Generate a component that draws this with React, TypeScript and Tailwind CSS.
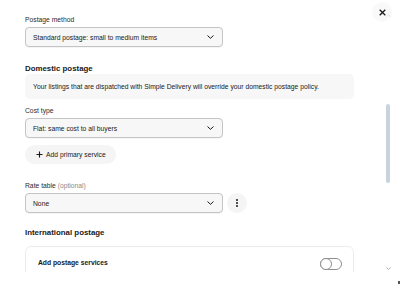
import React from "react";

const Chevron = () => (
  <svg width="7" height="4" viewBox="0 0 7 4" fill="none">
    <path d="M0.8 0.8l2.7 2.5 2.7-2.5" stroke="#191919" strokeWidth="1" strokeLinecap="round" strokeLinejoin="round" />
  </svg>
);

const Select = ({ value }: { value: string }) => (
  <div className="flex h-[20px] w-[198px] items-center justify-between rounded-[4px] border border-[#c4c4c4] bg-[#f7f7f7] pl-[7px] pr-[8px] shadow-[0_1px_0_rgba(0,0,0,0.04)]">
    <span className="text-[6.75px] leading-[9px] text-[#191919]">{value}</span>
    <Chevron />
  </div>
);

const Label = ({ children, className = "" }: { children: React.ReactNode; className?: string }) => (
  <div className={`text-[6.75px] leading-[9px] text-[#2b2b2b] ${className}`}>{children}</div>
);

export default function App() {
  return (
    <div
      className="relative flex h-[287px] w-[400px] overflow-hidden bg-white"
      style={{ fontFamily: '"Liberation Sans", Arial, sans-serif' }}
    >
      <div className="h-[272px] w-[354px] shrink-0 overflow-hidden pl-[25px]">
        <Label className="pt-[15px]">Postage method</Label>
        <div className="mt-[3px]">
          <Select value="Standard postage: small to medium items" />
        </div>

        <div className="mt-[17px] text-[7.875px] font-bold leading-[10px] text-[#191919]">Domestic postage</div>
        <div className="flex h-[25px] items-center rounded-[5px] bg-[#f7f7f7] px-[8px]">
          <span className="text-[6.75px] leading-[9px] text-[#191919]">
            Your listings that are dispatched with Simple Delivery will override your domestic postage policy.
          </span>
        </div>

        <Label className="mt-[7px]">Cost type</Label>
        <div className="mt-[3px]">
          <Select value="Flat: same cost to all buyers" />
        </div>

        <div className="mt-[7px] flex h-[19px] w-[91px] items-center gap-[3px] rounded-full bg-[#f5f5f5] pl-[11px]">
          <svg width="7" height="7" viewBox="0 0 7 7" fill="none">
            <path d="M3.5 0.5v6M0.5 3.5h6" stroke="#191919" strokeWidth="1.1" />
          </svg>
          <span className="text-[6.75px] leading-[9px] text-[#191919]">Add primary service</span>
        </div>

        <Label className="mt-[17px]">
          Rate table <span className="text-[#8a8a8a]">(optional)</span>
        </Label>
        <div className="mt-[3px] flex items-center gap-[4px]">
          <Select value="None" />
          <div className="flex h-[20px] w-[20px] flex-col items-center justify-center gap-[1.5px] rounded-full bg-[#f5f5f5]">
            <span className="h-[1.6px] w-[1.6px] rounded-full bg-[#191919]" />
            <span className="h-[1.6px] w-[1.6px] rounded-full bg-[#191919]" />
            <span className="h-[1.6px] w-[1.6px] rounded-full bg-[#191919]" />
          </div>
        </div>

        <div className="mt-[15px] text-[7.875px] font-bold leading-[10px] text-[#191919]">International postage</div>
        <div className="mt-[8px] h-[60px] w-[329px] rounded-[6px] border border-[#ececec] pl-[12px] pr-[11px] pt-[8px]">
          <div className="flex items-center justify-between">
            <span className="text-[6.75px] font-bold leading-[9px] text-[#191919]">Add postage services</span>
            <div className="relative mt-[3px] h-[12px] w-[22px] rounded-full border border-[#8f8f8f] bg-white">
              <div className="absolute -left-[1px] -top-[1px] h-[12px] w-[12px] rounded-full border border-[#8f8f8f] bg-white" />
            </div>
          </div>
        </div>
      </div>

      <div className="flex flex-1 justify-end pr-[8px]">
        <div className="flex w-[8px] flex-col items-center pt-[14px]">
          <svg width="5" height="3" viewBox="0 0 5 3" fill="none">
            <path d="M0.5 2.5l2-2 2 2" stroke="#9a9a9a" strokeWidth="0.8" />
          </svg>
          <div className="mt-[87px] h-[79px] w-[4px] rounded-full bg-[#c9d3de]" />
          <svg className="mt-[84px]" width="5" height="3" viewBox="0 0 5 3" fill="none">
            <path d="M0.5 0.5l2 2 2-2" stroke="#9a9a9a" strokeWidth="0.8" />
          </svg>
        </div>
      </div>

      <div className="absolute left-[372px] top-[2px] flex h-[20px] w-[20px] items-center justify-center rounded-full bg-[#f7f7f7]/70">
        <svg width="7" height="7" viewBox="0 0 7 7" fill="none">
          <path d="M0.7 0.7l5.6 5.6M6.3 0.7L0.7 6.3" stroke="#191919" strokeWidth="1.3" />
        </svg>
      </div>
      <div className="absolute bottom-[3px] right-0 h-[3px] w-[2px] bg-[#555]" />
    </div>
  );
}
